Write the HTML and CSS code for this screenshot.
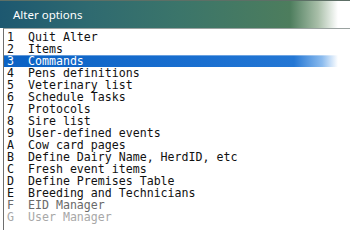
FILE: index.html
```html
<!DOCTYPE html>
<html>
<head>
<meta charset="utf-8">
<link rel="stylesheet" href="styles.css">
</head>
<body>
<div class="window">
  <div class="titlebar"><span class="title">Alter options</span></div>
  <div class="list">
    <div class="row"><span class="key">1</span><span>Quit Alter</span></div>
    <div class="row"><span class="key">2</span><span>Items</span></div>
    <div class="row selected"><span class="key">3</span><span>Commands</span></div>
    <div class="row"><span class="key">4</span><span>Pens definitions</span></div>
    <div class="row"><span class="key">5</span><span>Veterinary list</span></div>
    <div class="row"><span class="key">6</span><span>Schedule Tasks</span></div>
    <div class="row"><span class="key">7</span><span>Protocols</span></div>
    <div class="row"><span class="key">8</span><span>Sire list</span></div>
    <div class="row"><span class="key">9</span><span>User-defined events</span></div>
    <div class="row"><span class="key">A</span><span>Cow card pages</span></div>
    <div class="row"><span class="key">B</span><span>Define Dairy Name, HerdID, etc</span></div>
    <div class="row"><span class="key">C</span><span>Fresh event items</span></div>
    <div class="row"><span class="key">D</span><span>Define Premises Table</span></div>
    <div class="row"><span class="key">E</span><span>Breeding and Technicians</span></div>
    <div class="row dim"><span class="key">F</span><span>EID Manager</span></div>
    <div class="row dimmer"><span class="key">G</span><span>User Manager</span></div>
  </div>
</div>
</body>
</html>
```

FILE: styles.css
```css
html, body {
  margin: 0;
  padding: 0;
  background: #ffffff;
}
body {
  width: 350px;
  height: 242px;
  overflow: hidden;
}
.window {
  display: flex;
  flex-direction: column;
}
.titlebar {
  height: 27px;
  display: flex;
  align-items: center;
  padding-left: 13px;
  background: linear-gradient(90deg, #1d5870 0px, #2f6a70 90px, #3b756a 180px, #4d7d5d 290px, #a9bfa9 318px, #ffffff 338px);
  border-top: 1px solid #5d6f66;
}
.title {
  color: #ffffff;
  font-family: "Noto Sans", "Open Sans", sans-serif;
  font-size: 11.5px;
  margin-top: -1px;
}
.list {
  margin-left: 3px;
  height: 199px;
  border-top: 1px solid #9aa2a0;
  border-left: 1px solid #6e6e6e;
  padding-top: 2px;
  font-family: "DejaVu Sans Mono", "Liberation Mono", monospace;
  font-size: 11.6px;
  line-height: 12px;
  color: #111111;
}
.row {
  display: flex;
  height: 12px;
  padding-left: 3px;
  white-space: pre;
}
.key {
  width: 21px;
  flex: none;
}
.selected {
  color: #ffffff;
  background: linear-gradient(90deg, #0b62c4 0px, #1a6fd0 200px, #2477d4 290px, #8bbbee 318px, #ffffff 334px);
  box-shadow: inset 0 1px 0 0 rgba(255, 255, 255, 0.35);
}
.dim {
  color: #6a6a6a;
}
.dimmer {
  color: #a8a8a8;
}
```
